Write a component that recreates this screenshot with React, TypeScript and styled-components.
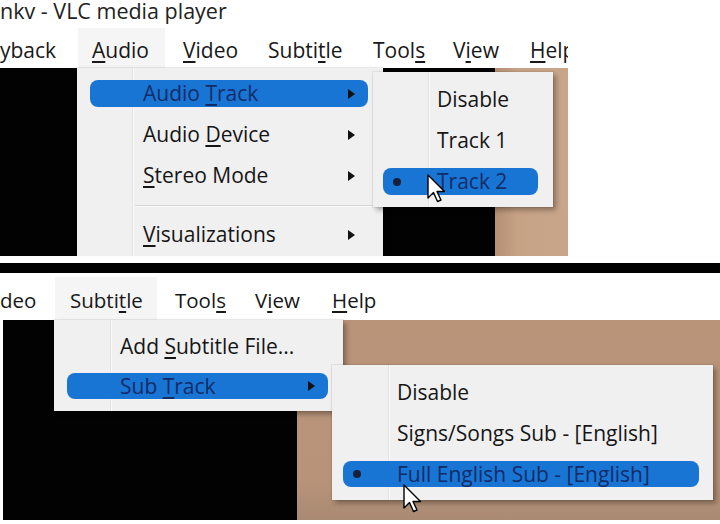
import React from 'react'
import styled, { createGlobalStyle } from 'styled-components'

const GlobalStyle = createGlobalStyle`
  html, body { margin: 0; padding: 0; background: #fff; }
  body {
    font-family: "Open Sans", "Noto Sans", "DejaVu Sans", sans-serif;
    color: #1b1b1b;
  }
  #root { width: 720px; height: 524px; overflow: hidden; }
`

const Page = styled.div`
  width: 720px;
  height: 524px;
  display: flex;
  flex-direction: column;
  background: #fff;
`

const Shot = styled.section<{ $w: number }>`
  width: ${p => p.$w}px;
  flex-shrink: 0;
  overflow: hidden;
`

const TitleBar = styled.div`
  height: 29px;
  font-size: 21.5px;
  line-height: 22px;
  white-space: nowrap;
  color: #222;
`

const MenuBar = styled.nav<{ $h: number; $top: number; $fs: number }>`
  position: relative;
  z-index: 0;
  display: flex;
  height: ${p => p.$h}px;
  padding-top: ${p => p.$top}px;
  box-sizing: border-box;
  font-size: ${p => p.$fs}px;
  line-height: ${p => p.$h - p.$top}px;
  white-space: nowrap;
  background: #fff;
  color: #181818;

  u { text-underline-offset: 3px; }
`

const BarItem = styled.div<{ $w?: number; $pre?: number; $box?: number }>`
  position: relative;
  flex: ${p => (p.$w ? `0 0 ${p.$w}px` : '1')};

  &::before {
    content: '';
    display: ${p => (p.$box ? 'block' : 'none')};
    position: absolute;
    z-index: -1;
    left: ${p => -(p.$pre ?? 0)}px;
    width: ${p => p.$box ?? 0}px;
    top: -4px;
    bottom: 0;
    background: #f5f5f5;
  }
`

const Video = styled.div<{ $h: number }>`
  position: relative;
  display: flex;
  height: ${p => p.$h}px;
`

const Gap = styled.div<{ $w: number }>`
  flex: 0 0 ${p => p.$w}px;
  background: #fff;
`

const Black = styled.div<{ $w: number }>`
  flex: 0 0 ${p => p.$w}px;
  background: #020202;
`

const Tan = styled.div<{ $dark?: boolean }>`
  flex: 1;
  background: ${p =>
    p.$dark
      ? 'linear-gradient(180deg, #b99479 0%, #b8937a 80%, #a98a72 100%)'
      : 'linear-gradient(90deg, #b48e72 0%, #c6a285 30%, #c8a68a 100%)'};
`

const Strip = styled.div<{ $h: number; $c: string }>`
  height: ${p => p.$h}px;
  background: ${p => p.$c};
  flex-shrink: 0;
`

const Menu = styled.div<{
  $x: number
  $y: number
  $w: number
  $fs: number
  $gutter: number
  $pt: number
  $pb: number
  $z: number
}>`
  position: absolute;
  left: ${p => p.$x}px;
  top: ${p => p.$y}px;
  width: ${p => p.$w}px;
  z-index: ${p => p.$z};
  display: flex;
  flex-direction: column;
  box-sizing: border-box;
  padding: ${p => p.$pt}px 0 ${p => p.$pb}px;
  background: #f0f0f0;
  font-size: ${p => p.$fs}px;
  box-shadow: 0 0 0 1px rgba(0, 0, 0, 0.06), 3px 3px 5px rgba(0, 0, 0, 0.32);

  &::before {
    content: '';
    position: absolute;
    left: ${p => p.$gutter}px;
    top: 0;
    bottom: 0;
    width: 1px;
    background: #e2e2e2;
    box-shadow: 1px 0 0 #fafafa;
  }

  u { text-underline-offset: 3px; }
`

const Item = styled.div<{ $active?: boolean; $lh: number; $m: string; $indent: number }>`
  position: relative;
  z-index: 1;
  display: flex;
  align-items: center;
  margin: ${p => p.$m};
  padding-left: ${p => p.$indent}px;
  height: ${p => p.$lh}px;
  line-height: ${p => p.$lh}px;
  border-radius: 8px;
  white-space: nowrap;
  background: ${p => (p.$active ? '#1975d3' : 'transparent')};
  color: ${p => (p.$active ? '#122c68' : '#161616')};
`

const Arrow = styled.span`
  margin-left: auto;
  margin-right: 13px;
  width: 0;
  height: 0;
  border-left: 7px solid #111;
  border-top: 5px solid transparent;
  border-bottom: 5px solid transparent;
`

const Bullet = styled.span`
  position: absolute;
  left: 10px;
  top: 50%;
  width: 8px;
  height: 8px;
  margin-top: -4px;
  border-radius: 50%;
  background: #14203c;
`

const Separator = styled.div<{ $l: number; $r: number }>`
  height: 18px;
  display: flex;
  align-items: center;

  &::after {
    content: '';
    flex: 1;
    height: 1px;
    margin: 0 ${p => p.$r}px 0 ${p => p.$l}px;
    background: #d6d6d6;
    box-shadow: 0 1px 0 #fafafa;
  }
`

const Pointer = styled.svg<{ $x: number; $y: number }>`
  position: absolute;
  left: ${p => p.$x}px;
  top: ${p => p.$y}px;
  width: 20px;
  height: 30px;
  z-index: 5;
  overflow: visible;
`

type Row =
  | { sep: true }
  | { sep?: false; label: React.ReactNode; arrow?: boolean; active?: boolean; dot?: boolean }

type Spec = {
  x: number
  y: number
  w: number
  fs: number
  gutter: number
  pt: number
  pb: number
  lh: number
  m: string
  indent: number
  z: number
  rows: Row[]
}

function DropMenu({ spec }: { spec: Spec }) {
  return (
    <Menu
      $x={spec.x}
      $y={spec.y}
      $w={spec.w}
      $fs={spec.fs}
      $gutter={spec.gutter}
      $pt={spec.pt}
      $pb={spec.pb}
      $z={spec.z}
    >
      {spec.rows.map((r, i) =>
        r.sep ? (
          <Separator key={i} $l={58} $r={10} />
        ) : (
          <Item key={i} $active={r.active} $lh={spec.lh} $m={spec.m} $indent={spec.indent}>
            {r.dot && <Bullet />}
            <span>{r.label}</span>
            {r.arrow && <Arrow />}
          </Item>
        )
      )}
    </Menu>
  )
}

function Cursor({ x, y }: { x: number; y: number }) {
  return (
    <Pointer $x={x} $y={y} viewBox="0 0 20 30">
      <path
        d="M1 1 L1 24 L6.5 18.5 L10.5 27.5 L14 26 L10 17.5 L17.5 17.5 Z"
        fill="#fff"
        stroke="#000"
        strokeWidth="1.4"
        strokeLinejoin="round"
      />
    </Pointer>
  )
}

const audioMenu: Spec = {
  x: 77, y: 0, w: 306, fs: 21, gutter: 55, pt: 5, pb: 2,
  lh: 27, m: '7px 15px 7px 13px', indent: 53, z: 2,
  rows: [
    { label: <>Audio <u>T</u>rack</>, arrow: true, active: true },
    { label: <>Audio <u>D</u>evice</>, arrow: true },
    { label: <><u>S</u>tereo Mode</>, arrow: true },
    { sep: true },
    { label: <><u>V</u>isualizations</>, arrow: true },
  ],
}

const trackMenu: Spec = {
  x: 373, y: 4, w: 180, fs: 21, gutter: 55, pt: 7, pb: 5,
  lh: 27, m: '7px 15px 7px 10px', indent: 54, z: 3,
  rows: [
    { label: 'Disable' },
    { label: 'Track 1' },
    { label: 'Track 2', active: true, dot: true },
  ],
}

const subtitleMenu: Spec = {
  x: 54, y: 0, w: 289, fs: 21, gutter: 56, pt: 6, pb: 5,
  lh: 26, m: '7px 15px 7px 13px', indent: 53, z: 2,
  rows: [
    { label: <>Add <u>S</u>ubtitle File...</> },
    { label: <>Sub <u>T</u>rack</>, arrow: true, active: true },
  ],
}

const subTrackMenu: Spec = {
  x: 332, y: 45, w: 381, fs: 21, gutter: 56, pt: 7, pb: 5,
  lh: 26, m: '7px 14px 8px 11px', indent: 54, z: 3,
  rows: [
    { label: 'Disable' },
    { label: 'Signs/Songs Sub - [English]' },
    { label: 'Full English Sub - [English]', active: true, dot: true },
  ],
}

export default function App() {
  return (
    <Page>
      <GlobalStyle />
      <Shot $w={568}>
        <TitleBar>nkv - VLC media player</TitleBar>
        <MenuBar $h={39} $top={3} $fs={21}>
          <BarItem $w={92}>yback</BarItem>
          <BarItem $w={91} $pre={14} $box={87}><u>A</u>udio</BarItem>
          <BarItem $w={85}><u>V</u>ideo</BarItem>
          <BarItem $w={105}>Subti<u>t</u>le</BarItem>
          <BarItem $w={80}>Tool<u>s</u></BarItem>
          <BarItem $w={77}>V<u>i</u>ew</BarItem>
          <BarItem><u>H</u>elp</BarItem>
        </MenuBar>
        <Video $h={188}>
          <Black $w={495} />
          <Tan />
          <DropMenu spec={audioMenu} />
          <DropMenu spec={trackMenu} />
          <Cursor x={427} y={106} />
        </Video>
      </Shot>
      <Strip $h={7} $c="#fff" />
      <Strip $h={10} $c="#000" />
      <Shot $w={720}>
        <MenuBar $h={47} $top={8} $fs={20.5}>
          <BarItem $w={70}>deo</BarItem>
          <BarItem $w={105} $pre={15} $box={102}>Subti<u>t</u>le</BarItem>
          <BarItem $w={80}>Tool<u>s</u></BarItem>
          <BarItem $w={77}>V<u>i</u>ew</BarItem>
          <BarItem><u>H</u>elp</BarItem>
        </MenuBar>
        <Video $h={200}>
          <Gap $w={3} />
          <Black $w={294} />
          <Tan $dark />
          <DropMenu spec={subtitleMenu} />
          <DropMenu spec={subTrackMenu} />
          <Cursor x={403} y={164} />
        </Video>
      </Shot>
    </Page>
  )
}
